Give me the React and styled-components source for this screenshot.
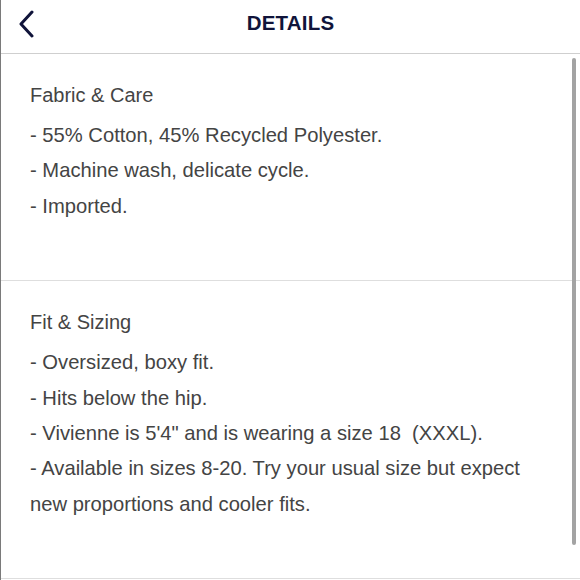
import React from "react";
import styled, { createGlobalStyle } from "styled-components";

const GlobalStyle = createGlobalStyle`
  html, body {
    margin: 0;
    padding: 0;
    background: #ffffff;
  }
  * {
    box-sizing: border-box;
  }
`;

const Screen = styled.div`
  position: relative;
  width: 580px;
  height: 580px;
  overflow: hidden;
  background: #fff;
  border-left: 1px solid #7a7a7a;
  font-family: "Liberation Sans", Arial, sans-serif;
  display: flex;
  flex-direction: column;
`;

const Header = styled.header`
  position: relative;
  height: 54px;
  flex: none;
  display: flex;
  align-items: center;
  justify-content: center;
  border-bottom: 1px solid #cfcfcf;
`;

const BackButton = styled.button`
  position: absolute;
  left: 12px;
  top: 8px;
  width: 26px;
  height: 32px;
  padding: 0;
  border: none;
  background: none;
  display: flex;
  align-items: center;
  justify-content: center;
`;

const Title = styled.h1`
  margin: 0;
  margin-top: -7px;
  font-size: 20.5px;
  font-weight: 700;
  color: #10143a;
  letter-spacing: 0.2px;
`;

const Content = styled.main`
  flex: 1;
  display: flex;
  flex-direction: column;
`;

const Section = styled.section`
  padding: 23px 40px 56px 29px;
  border-bottom: 1px solid #dedede;
  color: #444;
`;

const Heading = styled.h2`
  margin: 0 0 5px;
  font-size: 20px;
  line-height: 36px;
  font-weight: 400;
  color: #444;
`;

const Item = styled.p`
  margin: 0;
  font-size: 20.2px;
  line-height: 35.4px;
  color: #444;
`;

const Scrollbar = styled.div`
  position: absolute;
  right: 4px;
  top: 58px;
  width: 4px;
  height: 487px;
  border-radius: 2px;
  background: #a3a3a3;
`;

const sections = [
  {
    title: "Fabric & Care",
    items: [
      "- 55% Cotton, 45% Recycled Polyester.",
      "- Machine wash, delicate cycle.",
      "- Imported.",
    ],
  },
  {
    title: "Fit & Sizing",
    items: [
      "- Oversized, boxy fit.",
      "- Hits below the hip.",
      "- Vivienne is 5'4\" and is wearing a size 18\u00a0 (XXXL).",
      "- Available in sizes 8-20. Try your usual size but expect new proportions and cooler fits.",
    ],
  },
];

export default function App() {
  return (
    <>
      <GlobalStyle />
      <Screen>
        <Header>
          <BackButton aria-label="Back">
            <svg width="18" height="28" viewBox="0 0 18 28" fill="none">
              <path
                d="M15 2 L4 14 L15 26"
                stroke="#10143a"
                strokeWidth="3"
                strokeLinecap="round"
                strokeLinejoin="round"
              />
            </svg>
          </BackButton>
          <Title>DETAILS</Title>
        </Header>
        <Content>
          {sections.map((s) => (
            <Section key={s.title}>
              <Heading>{s.title}</Heading>
              {s.items.map((it) => (
                <Item key={it}>{it}</Item>
              ))}
            </Section>
          ))}
        </Content>
        <Scrollbar />
      </Screen>
    </>
  );
}
